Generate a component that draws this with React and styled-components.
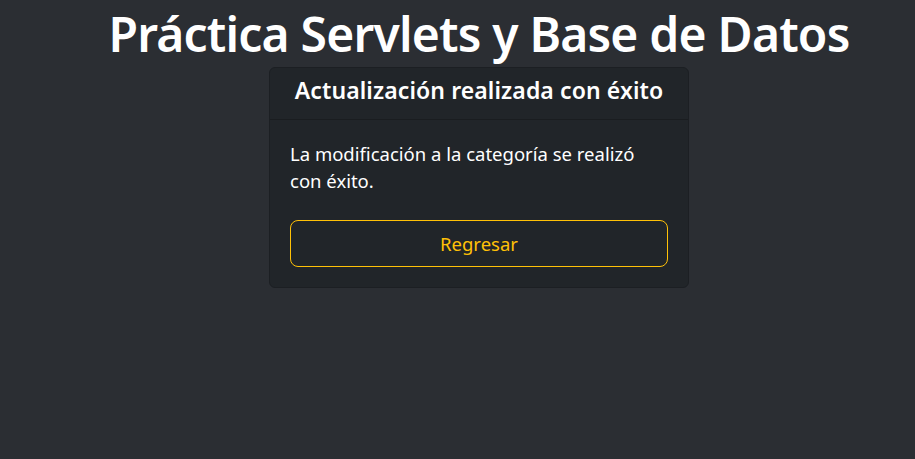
import React from 'react';
import styled, {createGlobalStyle} from 'styled-components';

const Global = createGlobalStyle`
    html, body {
        margin: 0;
        background: #2b2e33;
    }
    body {
        font-family: "Noto Sans", "Open Sans", sans-serif;
        color: #dee2e6;
    }
`

const Page = styled('div')`
    min-height: 459px;
    margin-left: 43px;
    display: flex;
    flex-direction: column;
    align-items: center;
`

const Title = styled('h1')`
    margin: 0;
    font-size: 48px;
    line-height: 67px;
    font-weight: 600;
    color: #fff;
    letter-spacing: -0.8px;
    white-space: nowrap;
`

const Card = styled('div')`
    width: 420px;
    box-sizing: border-box;
    background: #212529;
    border: 1px solid #1c1f23;
    border-radius: 6px;
`

const CardHeader = styled('div')`
    padding: 8px 16px;
    border-bottom: 1px solid #1a1d20;
    text-align: center;
    h4 {
        margin: 0 0 6px;
        font-size: 23px;
        line-height: 29px;
        font-weight: 600;
        color: #fff;
        letter-spacing: 0.1px;
    }
`

const CardBody = styled('div')`
    padding: 20px;
    p {
        margin: 0 0 26px;
        font-size: 18.5px;
        line-height: 27px;
        color: #fff;
    }
`

const OutlineButton = styled('button')`
    display: block;
    width: 100%;
    height: 47px;
    box-sizing: border-box;
    background: transparent;
    border: 1px solid ${props => props.color};
    border-radius: 8px;
    color: ${props => props.color};
    font-family: inherit;
    font-size: 18.5px;
    line-height: 27px;
    cursor: pointer;
`

export default function App() {
    return (
        <>
            <Global/>
            <Page>
                <Title>Práctica Servlets y Base de Datos</Title>
                <Card>
                    <CardHeader>
                        <h4>Actualización realizada con éxito</h4>
                    </CardHeader>
                    <CardBody>
                        <p>La modificación a la categoría se realizó con éxito.</p>
                        <OutlineButton color="#ffc107">Regresar</OutlineButton>
                    </CardBody>
                </Card>
            </Page>
        </>
    );
}
